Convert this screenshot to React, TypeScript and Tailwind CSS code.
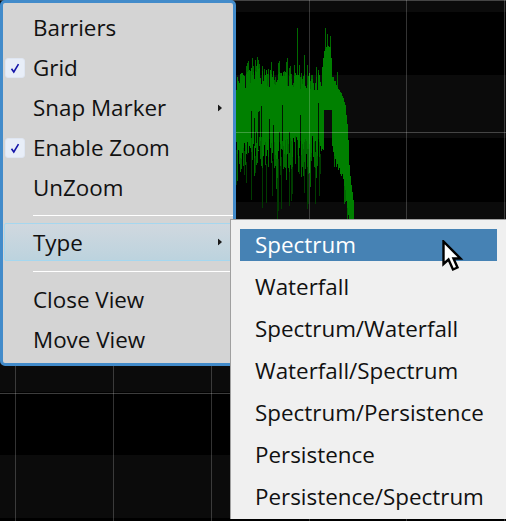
import React from "react";

function rng(seed: number) {
  let s = seed;
  return () => {
    s = (s * 1664525 + 1013904223) >>> 0;
    return s / 4294967296;
  };
}

const topPts: [number, number][] = [
  [236, 78], [250, 72], [256, 66], [262, 70], [275, 74], [290, 76], [310, 76], [320, 76], [322, 66], [324, 52],
  [326, 46], [330, 46], [331, 58], [332, 76], [336, 84], [340, 92], [343, 98], [345, 106], [347, 124], [348, 140], [349, 165], [351, 185], [353, 200], [354, 225],
];
const botPts: [number, number][] = [
  [236, 148], [242, 150], [260, 146], [280, 148], [300, 146], [318, 144], [323, 140], [323.5, 110], [331.5, 110], [332, 146],
  [336, 165], [342, 176], [346, 198], [349, 225], [354, 225],
];
function lerp(pts: [number, number][], x: number) {
  for (let i = 0; i < pts.length - 1; i++) {
    const [a, b] = pts[i];
    const [c, d] = pts[i + 1];
    if (x >= a && x <= c) return b + ((d - b) * (x - a)) / (c - a);
  }
  return pts[pts.length - 1][1];
}

function Spectrum() {
  const r = rng(4321);
  const solid: string[] = [];
  const dark: string[] = [];
  const mid: string[] = [];
  const holes: string[] = [];
  for (let x = 236; x <= 353; x++) {
    const left = x < 322;
    const j = r();
    const t = lerp(topPts, x) + (left ? j * j * 18 - 3 : (j - 0.5) * 2);
    const b = lerp(botPts, x) + (x < 324 ? (r() - 0.45) * 24 : x > 332 ? (r() - 0.5) * 6 : 0);
    const px = x + 0.5;
    solid.push(`M${px} ${t.toFixed(0)}V${b.toFixed(0)}`);
    if (left) {
      if (r() < 0.4) mid.push(`M${px} ${(t - 3 - r() * 9).toFixed(0)}V${t.toFixed(0)}`);
      if (r() < 0.55) mid.push(`M${px} ${b.toFixed(0)}V${(b + 6 + r() * 26).toFixed(0)}`);
      if (r() < 0.22) dark.push(`M${px} ${(b + 8).toFixed(0)}V${(b + 25 + r() * 38).toFixed(0)}`);
      if (r() < 0.24) holes.push(`M${px} ${(b - 8 - r() * 28).toFixed(0)}V${(b + 1).toFixed(0)}`);
    }
    if (x > 332 && x < 348 && r() < 0.45) mid.push(`M${px} ${b.toFixed(0)}V${(b + 6 + r() * 14).toFixed(0)}`);
  }
  const spikes = [
    "M297.5 28V80",
    "M304.5 55V80",
    "M307.5 65V80",
    "M252.5 58V80",
    "M258.5 60V80",
    "M271.5 62V80",
    "M287.5 58V80",
    "M337.5 72V90",
    "M325.5 28V50",
    "M327.5 34V50",
    "M330.5 36V50",
  ];
  return (
    <>
      <path d={dark.join("")} stroke="#003c00" strokeWidth="1" fill="none" />
      <path d={mid.join("")} stroke="#006a00" strokeWidth="1" fill="none" />
      <path d={spikes.join("")} stroke="#006a00" strokeWidth="1" fill="none" />
      <path d={solid.join("")} stroke="#008000" strokeWidth="1" fill="none" />
      <path d={holes.join("")} stroke="#001a00" strokeWidth="1" fill="none" />
      <path d="M258.5 112V150M254.5 118V146" stroke="#001a00" strokeWidth="1" fill="none" />
    </>
  );
}

function Chart() {
  return (
    <svg className="block" width="506" height="521" viewBox="0 0 506 521">
      <rect width="506" height="521" fill="#000" />
      {[-51, 75, 202, 329, 455].map((y) => (
        <rect key={y} x="0" y={y} width="506" height="63" fill="#0b0b0b" />
      ))}
      <Spectrum />
      {[15, 113, 211, 309, 406, 504].map((x) => (
        <rect key={x} x={x} y="0" width="1" height="521" fill="rgba(255,255,255,0.2)" />
      ))}
      {[0, 132, 393].map((y) => (
        <rect key={y} x="0" y={y} width="506" height="1" fill="rgba(255,255,255,0.24)" />
      ))}
    </svg>
  );
}

function Check() {
  return (
    <span className="absolute left-[2px] top-1/2 -translate-y-1/2 flex h-5 w-5 items-center justify-center rounded-[3px] border border-[#dfe6f2] bg-[#e8eef8]">
      <svg width="10" height="11" viewBox="0 0 10 11">
        <path d="M1.5 5.8 L3.8 9 L8.5 1.2" fill="none" stroke="#1414a8" strokeWidth="1.6" />
      </svg>
    </span>
  );
}

function Arrow() {
  return (
    <svg className="absolute right-[11px] top-1/2 -translate-y-1/2" width="4" height="7" viewBox="0 0 4 7">
      <path d="M0 0 L4 3.5 L0 7Z" fill="#1a1a1a" />
    </svg>
  );
}

function Item({ label, check, arrow }: { label: string; check?: boolean; arrow?: boolean }) {
  return (
    <div className="relative flex h-10 items-center pl-[30px]">
      {check && <Check />}
      <span>{label}</span>
      {arrow && <Arrow />}
    </div>
  );
}

function Sep() {
  return <div className="ml-[30px] h-px bg-white" />;
}

const subItems = [
  "Spectrum",
  "Waterfall",
  "Spectrum/Waterfall",
  "Waterfall/Spectrum",
  "Spectrum/Persistence",
  "Persistence",
  "Persistence/Spectrum",
];

export default function App() {
  return (
    <div className="relative h-[521px] w-[506px] overflow-hidden bg-black font-['Open_Sans','Noto_Sans',sans-serif] text-[22.4px] text-[#111]">
      <Chart />

      <div className="absolute left-0 top-0 h-[366px] w-[236px] rounded-[5px] border-[3px] border-[#428bca] bg-[#d4d4d4] pt-[5px]">
        <Item label="Barriers" />
        <Item label="Grid" check />
        <Item label="Snap Marker" arrow />
        <Item label="Enable Zoom" check />
        <Item label="UnZoom" />
        <div className="pt-[7px] pb-[7px]">
          <Sep />
        </div>
        <div className="relative mx-px flex h-[38px] items-center rounded-[2px] border border-[#a5d7ef] bg-gradient-to-b from-[#d0d8df] to-[#bcd3de] pl-[28px] pt-[2px]">
          <span>Type</span>
          <svg className="absolute right-[9px] top-1/2 -translate-y-1/2" width="4" height="7" viewBox="0 0 4 7">
            <path d="M0 0 L4 3.5 L0 7Z" fill="#1a1a1a" />
          </svg>
        </div>
        <div className="pt-[10px] pb-[8px]">
          <Sep />
        </div>
        <Item label="Close View" />
        <Item label="Move View" />
      </div>

      <div className="absolute left-[230px] top-[219px] h-[300px] w-[276px] border-l border-t border-[#a0a0a0] bg-[#f0f0f0] pt-[5px]">
        {subItems.map((s, i) => (
          <div key={s} className="h-[42px] px-[9px] py-[4px]">
            <div className={i === 0 ? "flex h-[32px] items-center bg-[#4682b4] pl-[15px] text-white" : "flex h-[32px] items-center pl-[15px]"}>{s}</div>
          </div>
        ))}
      </div>

      <svg className="absolute left-[442px] top-[240px]" width="22" height="32" viewBox="0 0 22 32">
        <path
          d="M1.5 1.5 V24 L6.5 19.5 L11 29.5 L15.5 27.5 L11.5 18.5 H18.5 Z"
          fill="#fff"
          stroke="#000"
          strokeWidth="2.4"
          strokeLinejoin="miter"
        />
      </svg>
    </div>
  );
}
